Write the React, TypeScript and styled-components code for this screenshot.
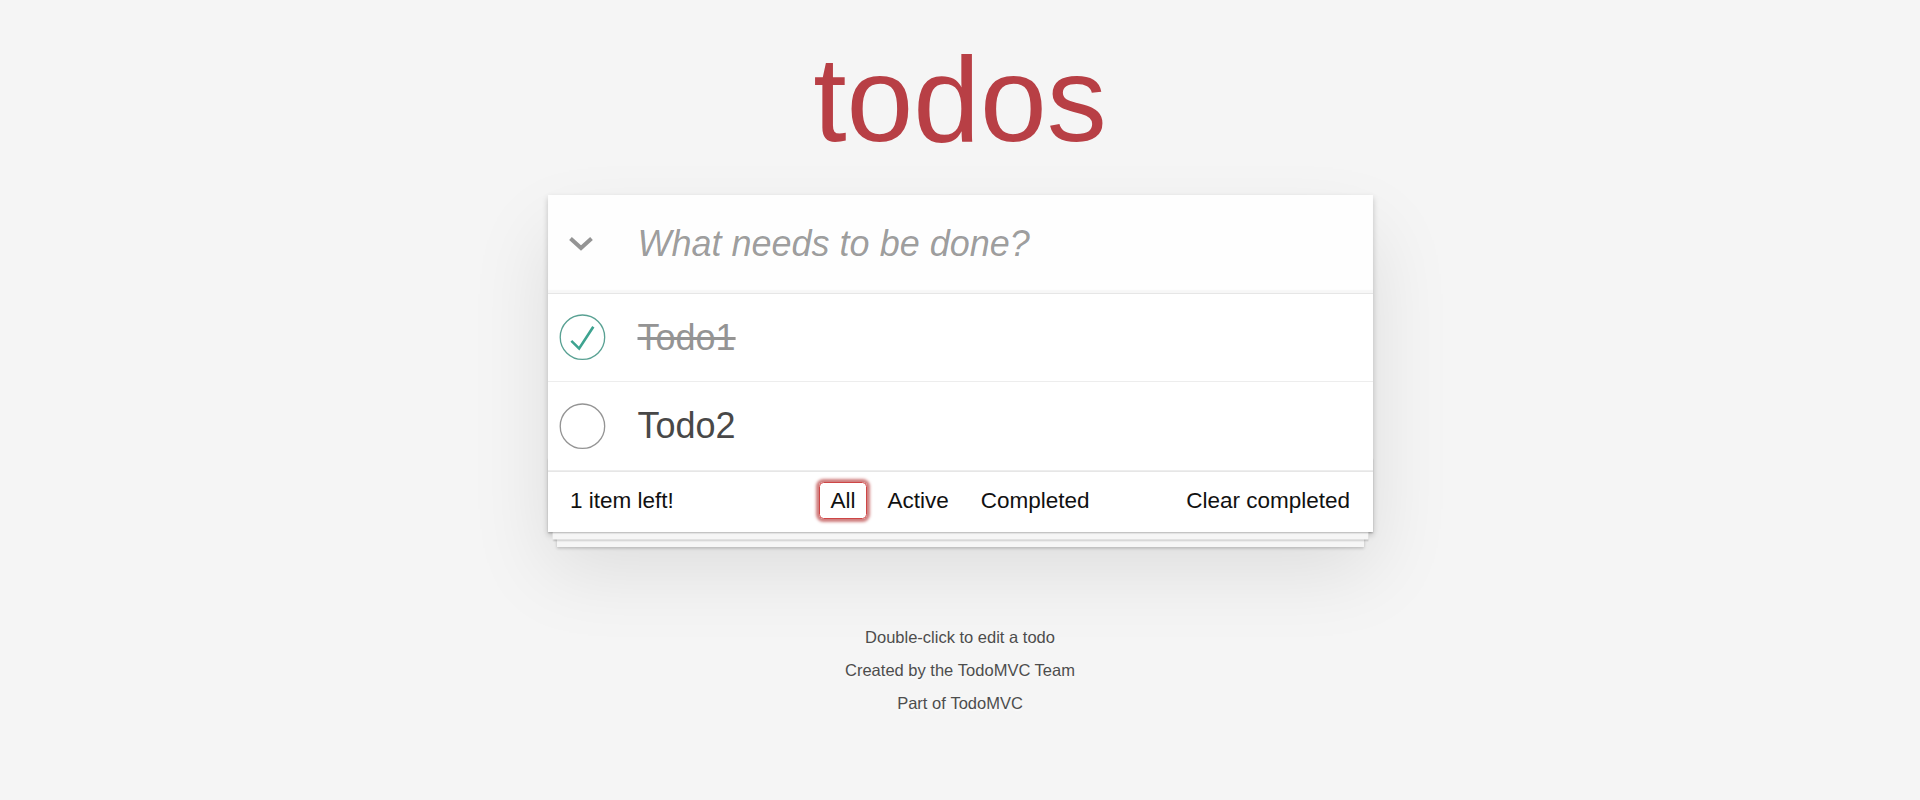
import React from "react";
import styled, { createGlobalStyle, css } from "styled-components";

const GlobalStyle = createGlobalStyle`
  html, body {
    margin: 0;
    padding: 0;
  }
  body {
    background: #f5f5f5;
    color: #111111;
    font-family: "Liberation Sans", Arial, Helvetica, sans-serif;
    font-size: 21px;
    line-height: 29.4px;
    font-weight: 300;
    -webkit-font-smoothing: antialiased;
  }
`;

const Page = styled.div`
  width: 825px;
  margin: 0 auto;
`;

const Title = styled.h1`
  margin: 0;
  padding-top: 39px;
  font-size: 120px;
  line-height: 120px;
  font-weight: 200;
  text-align: center;
  color: #b83f45;
  text-rendering: optimizeLegibility;
`;

const TodoApp = styled.section`
  position: relative;
  margin-top: 36px;
  background: #ffffff;
  box-shadow: 0 3px 6px 0 rgba(0, 0, 0, 0.2), 0 37.5px 75px 0 rgba(0, 0, 0, 0.1);
`;

const Header = styled.header`
  display: flex;
  align-items: stretch;
  height: 97.5px;
  background: rgba(0, 0, 0, 0.003);
  box-shadow: inset 0 -3px 1.5px rgba(0, 0, 0, 0.03);
`;

const ToggleAll = styled.label`
  flex: 0 0 67.5px;
  display: flex;
  align-items: center;
  justify-content: center;
  color: #949494;
  cursor: pointer;
`;

const NewTodo = styled.input`
  flex: 1;
  min-width: 0;
  margin: 0;
  padding: 24px 24px 24px 22.5px;
  border: none;
  outline: none;
  background: transparent;
  font-family: inherit;
  font-size: 36px;
  line-height: 50.4px;
  font-weight: 400;
  color: #111111;
  box-sizing: border-box;

  &::placeholder {
    font-style: italic;
    font-weight: 400;
    color: rgba(0, 0, 0, 0.4);
  }
`;

const Main = styled.section`
  position: relative;
  z-index: 2;
  border-top: 1px solid #e6e6e6;
`;

const TodoList = styled.ul`
  margin: 0;
  padding: 0;
  list-style: none;
`;

const TodoItem = styled.li`
  display: flex;
  align-items: center;
  font-size: 36px;
  border-bottom: 1px solid #ededed;
`;

const ToggleIcon = styled.svg`
  flex: 0 0 60px;
  width: 60px;
  height: 60px;
  display: block;
`;

const TodoLabel = styled.label<{ $completed?: boolean }>`
  flex: 1;
  display: block;
  padding: 22px 22.5px 22.5px 30px;
  line-height: 1.2;
  font-weight: 400;
  color: #484848;
  word-break: break-all;
  ${(p) =>
    p.$completed &&
    css`
      color: #949494;
      text-decoration: line-through;
    `}
`;

const Footer = styled.footer`
  display: grid;
  grid-template-columns: 1fr auto 1fr;
  grid-template-rows: 30px;
  align-items: center;
  height: 30px;
  padding: 14px 22.5px 16px;
  font-size: 22.5px;
  border-top: 1px solid #e6e6e6;

  &::before {
    content: "";
    position: absolute;
    right: 0;
    bottom: 0;
    left: 0;
    height: 75px;
    overflow: hidden;
    pointer-events: none;
    box-shadow: 0 1.5px 1.5px rgba(0, 0, 0, 0.2), 0 12px 0 -4.5px #f6f6f6,
      0 13.5px 1.5px -4.5px rgba(0, 0, 0, 0.2), 0 24px 0 -9px #f6f6f6,
      0 25.5px 3px -9px rgba(0, 0, 0, 0.2);
  }
`;

const Count = styled.span`
  justify-self: start;
  line-height: 29.4px;
  position: relative;
`;

const Filters = styled.ul`
  display: flex;
  margin: 0;
  padding: 0;
  list-style: none;
  position: relative;
`;

const FilterItem = styled.li`
  display: block;
`;

const FilterLink = styled.a<{ $selected?: boolean }>`
  display: block;
  margin: -3.5px 4.5px;
  padding: 4.5px 10.5px;
  line-height: 26px;
  color: inherit;
  text-decoration: none;
  border: 1px solid transparent;
  border-radius: 4.5px;
  cursor: pointer;
  ${(p) =>
    p.$selected &&
    css`
      border-color: #ce4646;
      box-shadow: 0 0 3px 3px #cf7d7d;
    `}
`;

const ClearButton = styled.button`
  justify-self: end;
  position: relative;
  margin: 0;
  padding: 0;
  border: 0;
  background: none;
  font-family: inherit;
  font-size: 100%;
  font-weight: inherit;
  color: inherit;
  line-height: 28.5px;
  cursor: pointer;
`;

const Info = styled.footer`
  margin: 97.5px auto 0;
  color: #4d4d4d;
  font-size: 16.5px;
  text-shadow: 0 1.5px 0 rgba(255, 255, 255, 0.5);
  text-align: center;
`;

const InfoLine = styled.p`
  margin: 16.5px 0;
  line-height: 1;
`;

const InfoLink = styled.a`
  color: inherit;
  text-decoration: none;
  font-weight: 400;
`;

const ChevronDown = () => (
  <svg width="26" height="16" viewBox="0 0 26 16" aria-hidden="true">
    <polyline
      points="2.5,2.5 13,12 23.5,2.5"
      fill="none"
      stroke="currentColor"
      strokeWidth="4"
      strokeLinecap="butt"
      strokeLinejoin="miter"
    />
  </svg>
);

const Toggle = ({ checked }: { checked: boolean }) => (
  <ToggleIcon viewBox="-10 -18 100 135" aria-hidden="true">
    <circle
      cx="50"
      cy="50"
      r="50"
      fill="none"
      stroke={checked ? "#59A193" : "#949494"}
      strokeWidth="3"
    />
    {checked && <path fill="#3EA390" d="M72 25L42 71 27 56l-4 4 20 20 34-52z" />}
  </ToggleIcon>
);

const todos = [
  { id: 1, title: "Todo1", completed: true },
  { id: 2, title: "Todo2", completed: false },
];

export default function App() {
  return (
    <>
      <GlobalStyle />
      <Page>
        <Title>todos</Title>
        <TodoApp>
          <Header>
            <ToggleAll aria-label="Toggle All Input">
              <ChevronDown />
            </ToggleAll>
            <NewTodo placeholder="What needs to be done?" />
          </Header>
          <Main>
            <TodoList>
              {todos.map((t) => (
                <TodoItem key={t.id}>
                  <Toggle checked={t.completed} />
                  <TodoLabel $completed={t.completed}>{t.title}</TodoLabel>
                </TodoItem>
              ))}
            </TodoList>
          </Main>
          <Footer>
            <Count>1 item left!</Count>
            <Filters>
              <FilterItem>
                <FilterLink $selected>All</FilterLink>
              </FilterItem>
              <FilterItem>
                <FilterLink>Active</FilterLink>
              </FilterItem>
              <FilterItem>
                <FilterLink>Completed</FilterLink>
              </FilterItem>
            </Filters>
            <ClearButton>Clear completed</ClearButton>
          </Footer>
        </TodoApp>
        <Info>
          <InfoLine>Double-click to edit a todo</InfoLine>
          <InfoLine>
            Created by the <InfoLink>TodoMVC Team</InfoLink>
          </InfoLine>
          <InfoLine>
            Part of <InfoLink>TodoMVC</InfoLink>
          </InfoLine>
        </Info>
      </Page>
    </>
  );
}
